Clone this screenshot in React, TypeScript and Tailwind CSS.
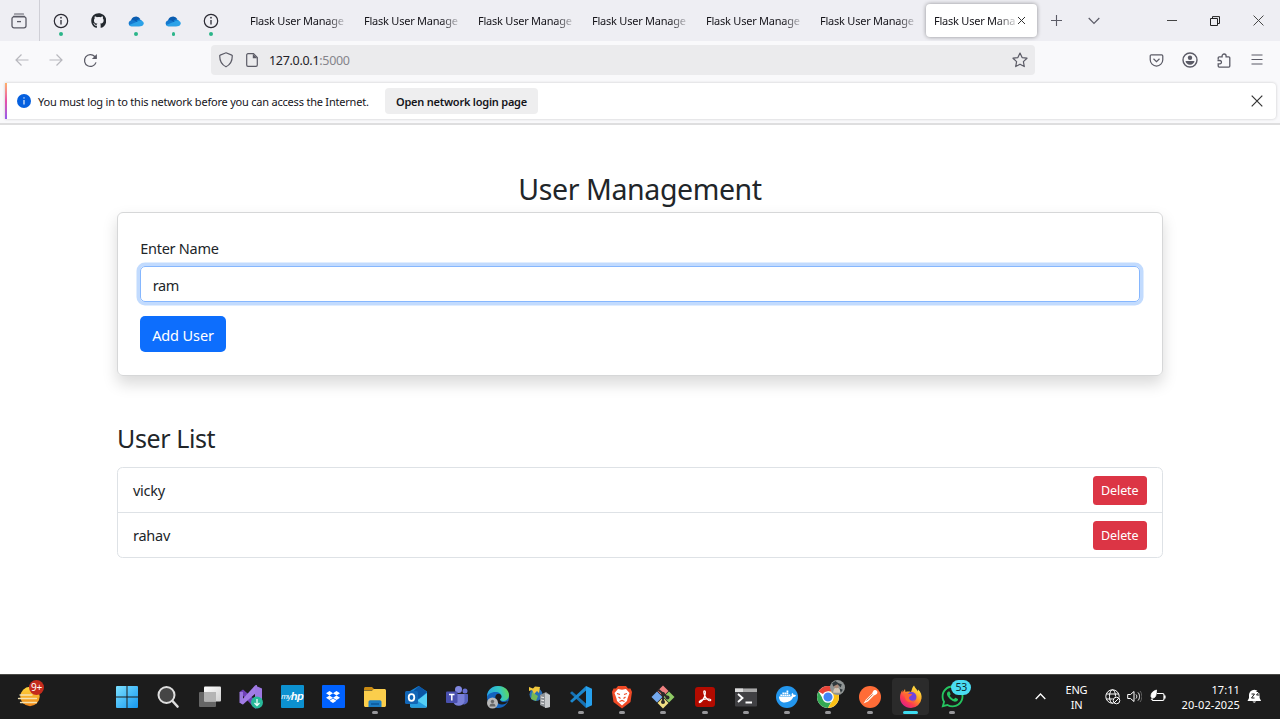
import React from "react";
import { FaGithub, FaDropbox, FaDocker, FaWhatsapp } from "react-icons/fa";

const tabs = [0, 1, 2, 3, 4, 5];

function Svg({ children, className = "size-6", box = "0 0 24 24" }: { children: React.ReactNode; className?: string; box?: string }) {
  return (
    <svg viewBox={box} className={`${className} shrink-0`} fill="none">
      {children}
    </svg>
  );
}

function InfoIcon() {
  return (
    <Svg className="size-4" box="0 0 16 16">
      <circle cx="8" cy="8" r="6.7" stroke="#2b2a33" strokeWidth="1.2" />
      <path d="M8 7v4.5" stroke="#2b2a33" strokeWidth="1.3" />
      <circle cx="8" cy="4.7" r=".85" fill="#2b2a33" />
    </Svg>
  );
}

function CloudIcon() {
  return (
    <Svg className="size-4" box="0 0 16 16">
      <path d="M3 8.2A5 5 0 0 1 12.3 6l-3 4.5L1 11.8A3.2 3.2 0 0 1 3 8.2z" fill="#0a5cb0" />
      <path d="M8.5 7.5 11 6.2a4 4 0 0 1 2.8 1.5l-2 3.5z" fill="#1283d8" />
      <path d="M1 11.5a3 3 0 0 1 2.5-4.3 4 4 0 0 1 3 .3l7 4.5-2 1.3h-8A2.8 2.8 0 0 1 1 11.5z" fill="#1479cf" />
      <path d="M1.2 12 9 8.8c1-.7 3.5-2 5.2-.8A2.8 2.8 0 0 1 13 13.3H3.4c-1 0-1.8-.6-2.2-1.3z" fill="#2ca2e8" />
    </Svg>
  );
}

function PinnedTab({ children, dot = true }: { children: React.ReactNode; dot?: boolean }) {
  return (
    <div className="relative flex h-[41px] w-[37.5px] items-center justify-center">
      {children}
      {dot && <span className="absolute top-[32px] size-[3.5px] rounded-full bg-[#2bb58a]" />}
    </div>
  );
}

function TabBar() {
  return (
    <div className="flex h-[41px] bg-[#eeeef3] text-[#15141a]">
      <div className="flex w-10 items-center justify-center border-r border-[#cfcfd6] pr-[2px]">
        <Svg className="size-4" box="0 0 16 16">
          <path d="M3.5 1h9M2.5 3.3h11" stroke="#5b5b66" strokeWidth="1.2" strokeLinecap="round" />
          <rect x="1" y="3.8" width="14" height="11" rx="2" stroke="#5b5b66" strokeWidth="1.3" />
          <path d="M6 8.6h4" stroke="#5b5b66" strokeWidth="1.3" />
        </Svg>
      </div>
      <div className="flex w-[193px] pl-[2px]">
        <PinnedTab><InfoIcon /></PinnedTab>
        <PinnedTab dot={false}><FaGithub className="size-[15.5px] text-[#24292f]" /></PinnedTab>
        <PinnedTab><CloudIcon /></PinnedTab>
        <PinnedTab><CloudIcon /></PinnedTab>
        <PinnedTab><InfoIcon /></PinnedTab>
      </div>
      {tabs.map((t) => (
        <div key={t} className="flex w-[114px] items-center pt-[2px] pr-[3px] pl-[17px]">
          <span className="w-[94px] overflow-hidden text-[11px] tracking-[-0.23px] whitespace-nowrap [mask-image:linear-gradient(to_right,#000_78px,transparent_98px)]">Flask User Manage</span>
        </div>
      ))}
      <div className="mt-[4px] ml-[9px] flex h-[33px] w-[111px] items-center rounded bg-white pl-[8px] shadow-[0_0_4px_rgba(0,0,0,0.4)]">
        <span className="w-[81px] overflow-hidden pt-px text-[11px] tracking-[-0.23px] whitespace-nowrap [mask-image:linear-gradient(to_right,#000_62px,transparent_86px)]">Flask User Mana</span>
        <Svg className="ml-[2px] size-[9px]" box="0 0 9 9"><path d="m1 1 7 7M8 1 1 8" stroke="#333" strokeWidth="1" /></Svg>
      </div>
      <div className="flex w-[58px] items-center pl-[14px]">
        <Svg className="size-[11px]" box="0 0 11 11"><path d="M5.5 0v11M0 5.5h11" stroke="#5b5b66" strokeWidth="1.1" /></Svg>
        <Svg className="ml-[26px] size-3" box="0 0 12 12"><path d="m.7 3 5.3 5.3L11.3 3" stroke="#5b5b66" strokeWidth="1.2" /></Svg>
      </div>
      <div className="ml-auto flex items-center gap-[33px] pr-4">
        <Svg className="size-[10px]" box="0 0 10 10"><path d="M0 4.5h10" stroke="#444" /></Svg>
        <Svg className="size-[10px]" box="0 0 10 10"><path d="M.5 2.5h7v7h-7zM2.5 2V.6h7v6.9H8" stroke="#222" /></Svg>
        <Svg className="size-[11px]" box="0 0 10 10"><path d="m.5.5 9 9M9.5.5l-9 9" stroke="#444" strokeWidth=".9" /></Svg>
      </div>
    </div>
  );
}

function Toolbar() {
  return (
    <div className="flex h-[42px] items-center bg-[#f9f9fb] pb-[4px]">
      <div className="flex w-[211px] items-center gap-[20px] pl-[15px]">
        <Svg className="size-[14px]" box="0 0 14 14"><path d="M13.5 7H1M6.5 1.5 1 7l5.5 5.5" stroke="#b8b8be" strokeWidth="1.2" /></Svg>
        <Svg className="size-[14px]" box="0 0 14 14"><path d="M.5 7H13M7.5 1.5 13 7l-5.5 5.5" stroke="#b8b8be" strokeWidth="1.2" /></Svg>
        <Svg className="size-[15px]" box="0 0 16 16"><path d="M13.9 10A6.3 6.3 0 1 1 12.5 3.7L14 5.2" stroke="#5b5b66" strokeWidth="1.3" /><path d="M14.8 1v5.3H9.5z" fill="#5b5b66" /></Svg>
      </div>
      <div className="flex h-[30px] w-[824px] items-center rounded bg-[#ebebed] pr-[7px] pl-[7px]">
        <Svg className="size-4" box="0 0 16 16"><path d="m8 .8 5.8 2.3c.3.1.5.4.5.7 0 4.5-2 9-6.3 11C3.7 12.800 1.7 8.3 1.7 3.8c0-.3.2-.6.5-.7z" stroke="#5b5b66" strokeWidth="1.2" /></Svg>
        <Svg className="ml-[11px] size-[14px]" box="0 0 14 14"><path d="M8.5.7H3A1.3 1.3 0 0 0 1.7 2v10A1.3 1.3 0 0 0 3 13.3h8a1.3 1.3 0 0 0 1.3-1.3V4.5z" stroke="#5b5b66" strokeWidth="1.2" /><path d="M7.8.7v4.6h4.5z" fill="#5b5b66" /></Svg>
        <span className="ml-[10px] pt-[2px] text-[12.5px] tracking-[-0.3px] text-[#222128]">127.0.0.1<span className="text-[#85858b]">:5000</span></span>
        <Svg className="ml-auto size-4" box="0 0 16 16"><path d="m8 1 2.1 4.6 4.9.6-3.6 3.4.9 5L8 12.2l-4.3 2.4.9-5L1 6.2l4.9-.6z" stroke="#5b5b66" strokeWidth="1.2" strokeLinejoin="round" /></Svg>
      </div>
      <div className="ml-auto flex items-center gap-[18px] pr-[17px]">
        <Svg className="-ml-px size-[15px]" box="0 0 16 16"><path d="M2.5 2h11c.7 0 1.2.5 1.2 1.2v4a6.7 6.7 0 0 1-13.4 0v-4C1.3 2.5 1.8 2 2.5 2z" stroke="#5b5b66" strokeWidth="1.3" /><path d="m4.8 6.2 3.2 3 3.2-3" stroke="#5b5b66" strokeWidth="1.3" /></Svg>
        <Svg className="size-4" box="0 0 16 16"><circle cx="8" cy="8" r="7" stroke="#5b5b66" strokeWidth="1.4" /><circle cx="8" cy="5.8" r="2.2" fill="#5b5b66" /><path d="M3.5 9h9c-.2 2-2 3.7-4.5 3.7S3.7 11 3.5 9z" fill="#5b5b66" /></Svg>
        <Svg className="size-[15px]" box="0 0 15 15"><path d="M2.2 6.5V4.8c0-.6.4-1 1-1h2.9V3a2 2 0 1 1 4 0v.8h2.7c.6 0 1 .4 1 1v8.3c0 .6-.4 1-1 1H3.2c-.6 0-1-.4-1-1v-2.3h1.6c2.2 0 2.2-3.300 0-3.300H1.5" stroke="#5b5b66" strokeWidth="1.3" /></Svg>
        <Svg className="ml-[2px] size-3" box="0 0 12 12"><path d="M.5 1h11M.5 5.5h11M.5 10h11" stroke="#5b5b66" strokeWidth="1.1" /></Svg>
      </div>
    </div>
  );
}

function Notice() {
  return (
    <div className="h-[42px] border-b-2 border-[#dededf] bg-[#f9f9fb] pr-1 pl-[5px]">
      <div className="flex h-9 items-center rounded-r bg-white shadow-[0_0_3px_rgba(0,0,0,0.2)]">
        <div className="h-full w-[2px] bg-linear-to-b from-[#ffb066] via-[#e74fa8] to-[#9457eb]" />
        <Svg className="ml-[10px] size-[14px]" box="0 0 14 14"><circle cx="7" cy="7" r="7" fill="#0560df" /><path d="M7 6v4.5" stroke="#fff" strokeWidth="1.1" /><circle cx="7" cy="3.9" r=".7" fill="#fff" /></Svg>
        <span className="ml-[7px] w-[331px] pt-[2px] text-[11px] tracking-[-0.21px] whitespace-nowrap text-[#15141a]">You must log in to this network before you can access the Internet.</span>
        <button className="ml-[16px] h-[26px] w-[153px] rounded bg-[#eeeeef] pt-[2px] text-[11px] font-semibold tracking-[-0.23px] whitespace-nowrap text-[#15141a]">Open network login page</button>
        <Svg className="mr-[13px] ml-auto size-3" box="0 0 12 12"><path d="m.7.7 10.6 10.6M11.3.7.7 11.3" stroke="#333" strokeWidth="1.2" /></Svg>
      </div>
    </div>
  );
}

function Row({ name }: { name: string }) {
  return (
    <li className="flex h-[45px] items-center justify-between border-b border-[#dee2e6] px-[15px] last:h-[44px] last:border-b-0">
      <span className="pt-[1.5px] text-[14.5px] tracking-[-0.25px]">{name}</span>
      <button className="h-[29px] w-[54.5px] rounded-[3.5px] bg-[#dc3545] pt-[2px] text-[12.5px] tracking-[-0.1px] text-white">Delete</button>
    </li>
  );
}

function TaskIcon({ children, mark = false, active = false }: { children: React.ReactNode; mark?: boolean; active?: boolean }) {
  return (
    <div className="relative flex h-[45px] w-[41.25px] items-center justify-center pb-[2px]">
      {active && <span className="absolute top-[3px] h-[37px] w-[37px] rounded bg-[#2b2b2b]" />}
      <span className="relative flex">{children}</span>
      {mark && <span className={active ? "absolute top-[36px] h-[3px] w-[15px] rounded bg-[#3ddcf0]" : "absolute top-[36px] h-[3px] w-[6px] rounded bg-[#97979a]"} />}
    </div>
  );
}

function Taskbar() {
  return (
    <footer className="flex h-[45px] border-t border-[#4a4a46] bg-[#1c1c1c] text-white">
      <div className="relative flex w-[106.6px] items-center pb-[2px] pl-[17px]">
        <Svg className="size-[26px]" box="0 0 26 26">
          <defs><linearGradient id="sun" x1="0" y1="0" x2="0" y2="1"><stop stopColor="#ffd83d" /><stop offset="1" stopColor="#ef8418" /></linearGradient></defs>
          <circle cx="13" cy="13.5" r="9.7" fill="url(#sun)" />
          <path d="M3 12h12M1.5 15.5h18M3.5 19.5h16" stroke="#f4e2b0" strokeWidth="1.3" strokeLinecap="round" />
        </Svg>
        <span className="absolute top-[5px] left-[29px] flex size-[15px] items-center justify-center rounded-full bg-[#c42b1c] text-[10px] tracking-[-0.3px]">9+</span>
      </div>
      <TaskIcon><Svg>
        <defs><linearGradient id="win" x1="0" y1="0" x2="1" y2="1"><stop stopColor="#7be0ff" /><stop offset="1" stopColor="#1597f0" /></linearGradient></defs>
        <path d="M1 2a1 1 0 0 1 1-1h9.5v10.5H1zM12.5 1H22a1 1 0 0 1 1 1v9.5H12.5zM1 12.5h10.5V23H2a1 1 0 0 1-1-1zM12.5 12.5H23V22a1 1 0 0 1-1 1h-9.5z" fill="url(#win)" />
      </Svg></TaskIcon>
      <TaskIcon><Svg><circle cx="10.5" cy="10" r="8" fill="#454545" stroke="#dedede" strokeWidth="2" /><path d="m16.5 16 5 5.5" stroke="#dedede" strokeWidth="2.6" strokeLinecap="round" /></Svg></TaskIcon>
      <TaskIcon><Svg>
        <defs><linearGradient id="tv" x1="0" y1="0" x2="1" y2="1"><stop stopColor="#fff" /><stop offset="1" stopColor="#cfcfcf" /></linearGradient></defs>
        <rect x="1" y="7" width="17" height="15" rx="1" fill="#666" /><rect x="6" y="1.5" width="17" height="15" rx="1" fill="url(#tv)" /><path d="M6 7h12v9.5H7a1 1 0 0 1-1-1z" fill="#b4b4b4" />
      </Svg></TaskIcon>
      <TaskIcon><Svg>
        <path d="m.5 7 3.500-2.500 14 12V23l-2 .5z" fill="#7040b8" /><path d="M.5 7v10.5L4 19.5V7z" fill="#9b78df" /><path d="m4 19.5-3.500-2L16 .5 18 0v7z" fill="#a27ce6" /><path d="m16 .5 7 3v16.5l-7 3.500z" fill="#9d78e2" />
        <circle cx="18" cy="17.5" r="6" fill="#28b99a" /><path d="M18 14v6.5M15.5 18l2.500 2.500 2.500-2.500" stroke="#e8fff9" strokeWidth="1.3" />
      </Svg></TaskIcon>
      <TaskIcon><span className="flex h-[23px] w-[23px] items-center justify-center rounded-[1px] bg-[#0c91d0] font-['Liberation_Sans',sans-serif] text-[8px] tracking-[-0.5px] italic">my<span className="text-[11px] font-bold">hp</span></span></TaskIcon>
      <TaskIcon><span className="flex h-[23px] w-[23px] items-center justify-center rounded-[1px] bg-[#0061fe]"><FaDropbox className="size-[14px]" /></span></TaskIcon>
      <TaskIcon mark><Svg>
        <path d="M1 3.5C1 2.7 1.7 2 2.5 2H9l3 3H1z" fill="#c98a12" /><path d="M1 5.5h8L11 4h10.5c.8 0 1.5.7 1.5 1.5v15c0 .8-.7 1.5-1.5 1.5h-19C1.7 22 1 21.3 1 20.5z" fill="#fbce4c" /><path d="M5.5 22v-5c0-1 .7-1.7 1.7-1.7h9.6c1 0 1.7.7 1.7 1.7v5z" fill="#1b7dc4" /><path d="M8 19h8" stroke="#0c5798" strokeWidth="1.5" />
      </Svg></TaskIcon>
      <TaskIcon><Svg>
        <path d="M6 6 14.5 1 23 6.5V21a1.5 1.5 0 0 1-1.5 1.5h-14A1.5 1.5 0 0 1 6 21z" fill="#1781d2" /><path d="m15 1 8 6-8 7-9-5z" fill="#0b55a4" /><path d="m6 21 17-13v13a1.5 1.5 0 0 1-1.5 1.5h-14z" fill="#54cff5" /><path d="m6 11 17 11-1.5.5h-14A1.5 1.5 0 0 1 6 21z" fill="#259cdf" />
        <rect x="1" y="6" width="13" height="13" rx="1.5" fill="#1266b6" /><ellipse cx="7.5" cy="12.5" rx="2.8" ry="3.3" stroke="#fff" strokeWidth="1.8" />
      </Svg></TaskIcon>
      <TaskIcon><Svg>
        <circle cx="20" cy="6" r="2.5" fill="#6870d0" /><path d="M16 9h6c.6 0 1 .4 1 1v6a4 4 0 0 1-7 2z" fill="#5661bd" /><circle cx="13.5" cy="4.5" r="3.5" fill="#8087df" /><path d="M8 9h10.5c.6 0 1 .4 1 1v6.5a6 6 0 0 1-11.5 0z" fill="#7980d8" /><rect x="1" y="6.5" width="11.5" height="11.5" rx="1" fill="#4950ae" /><path d="M4 9.5h5.5M6.8 9.5v6" stroke="#fff" strokeWidth="1.5" />
      </Svg></TaskIcon>
      <TaskIcon><Svg>
        <defs><linearGradient id="edge" x1="0" y1=".5" x2="1" y2=".3"><stop stopColor="#27a7e5" /><stop offset=".6" stopColor="#35c9bf" /><stop offset="1" stopColor="#65d84f" /></linearGradient></defs>
        <circle cx="12" cy="12" r="11" fill="#1464bd" /><path d="M1 12C1 5 6 1 12 1c7 0 11 4.5 11 9 0 4-3 6-6 6-2 0-3-.8-3-1.5s1.5-1 1.5-3C15.5 9 13 7 9.5 7 5 7 1.5 9.5 1 12z" fill="url(#edge)" /><path d="M10 10c-2 3 .5 9.500 6 9.500 2.500 0 4.500-1 6-3.500-4 2-8 1-8-1.500 0-.7 1.500-1 1.500-3 0-2-3.500-4-5.500-1.500z" fill="#1c1c1c" />
        <circle cx="6.5" cy="18" r="5.5" fill="#b9b9b9" /><circle cx="6.5" cy="16.5" r="1.7" fill="#696969" /><path d="M3.5 21.5a3 3 0 0 1 6 0z" fill="#696969" />
      </Svg></TaskIcon>
      <TaskIcon><Svg>
        <circle cx="8" cy="9.5" r="6.5" fill="#2a6fb7" /><path d="m4 7 6 4-2 5-5-2z" fill="#73b956" /><path d="m1 2 4 1.500 2-2 5 .5-1 6-2-2-3 3-2-4-3 1z" fill="#f2c83d" /><path d="m12 10 6-3 4 3v12l-4 1-6-3z" fill="#8e9296" /><path d="m17 8 5 2v12l-5 1z" fill="#c6c9cb" /><path d="m13 12 3 .7M13 15l3 .7M13 18l3 .7" stroke="#eee" />
      </Svg></TaskIcon>
      <TaskIcon mark><Svg>
        <path d="m17 1 6 2.7v16.6L17 23z" fill="#26a1ee" /><path d="m1 8 2-1.8 14 12.3V23z" fill="#1672b5" /><path d="m1 16 2 1.8L17 5.5V1z" fill="#1d88ce" />
      </Svg></TaskIcon>
      <TaskIcon mark><Svg>
        <path d="M8 1h8l2 2.500h2.500L22 7l-1.500 10L12 23.500 3.500 17 2 7l1.500-3.500H6z" fill="#f04a26" /><path d="M12 4.800 8 4 4.500 8l2 5.500.5 2.500 5 4.500 5-4.500.5-2.500 2-5.500L16 4z" fill="#fff" /><path d="m7 8.500 3 1M17 8.500l-3 1M8.500 12l2 1.500M15.500 12l-2 1.500M9.500 16.500l2.500-1 2.500 1" stroke="#f04a26" strokeWidth="1.2" />
      </Svg></TaskIcon>
      <TaskIcon mark><Svg>
        <path d="m12 .5 5.500 5.500L12 11.500 6.500 6z" fill="#ee8080" /><path d="m6 6.500 5.500 5.500L6 17.500.5 12z" fill="#74a9ee" /><path d="m18 6.500 5.500 5.500-5.500 5.500-5.500-5.500z" fill="#8fca65" /><path d="m12 12.500 5.500 5.500-5.500 5.500L6.500 18z" fill="#f1df84" /><path d="m7 4.500 5 4v9M12 8.500l4.500 4" stroke="#2e2a2a" strokeWidth="2" /><circle cx="12" cy="9" r="2" fill="#2e2a2a" /><circle cx="12" cy="17" r="2" fill="#2e2a2a" /><circle cx="16.5" cy="12.5" r="2" fill="#2e2a2a" />
      </Svg></TaskIcon>
      <TaskIcon mark><Svg><rect x="2" y="2" width="20" height="20" rx="3" fill="#b30b00" /><path d="M11 6c2-1 1.500 3 .5 5.500S8 18 6.500 17.500c-1.500-1 3-3.500 7-3.700 3-.2 5 .7 4 1.700-1.300 1.200-5-2.500-6-5.500C10.800 8 10.500 6.500 11 6z" stroke="#fff" strokeWidth="1.2" /></Svg></TaskIcon>
      <TaskIcon mark><Svg><rect x="1" y="3.5" width="22" height="18" rx="1" fill="#414144" /><path d="M1 3.500h22V7H1z" fill="#a9a9a9" /><path d="M1 3.500h8V7H1z" fill="#ddd" /><path d="m4 9 4.500 4L4 17M11.500 17.500H18" stroke="#fff" strokeWidth="1.9" /></Svg></TaskIcon>
      <TaskIcon mark><span className="flex size-[22px] items-center justify-center rounded-full bg-[#2396ed]"><FaDocker className="size-[17px]" /></span></TaskIcon>
      <TaskIcon mark>
        <Svg><circle cx="12" cy="12" r="11" fill="#fff" /><path d="M12 12 2.500 6.500A11 11 0 0 1 21.500 6.500H12z" fill="#e84437" /><path d="M2.500 6.500A11 11 0 0 0 12 23l4.500-8.500L12 17l-5-3z" fill="#34a853" /><path d="M21.500 6.500H12l5 8L12 23A11 11 0 0 0 21.500 6.500z" fill="#fbc116" /><circle cx="12" cy="12" r="5.2" fill="#4285f4" stroke="#fff" strokeWidth="1.3" /></Svg>
        <span className="absolute -top-[5px] left-[14px]"><Svg className="size-[15px]" box="0 0 14 14"><circle cx="7" cy="7" r="7" fill="#8f9494" /><path d="M3 12c0-3 1-5 3-5s4 2 4 5z" fill="#d1c5b5" /><circle cx="6" cy="5.5" r="2.3" fill="#ad8b79" /><path d="m2 3 3-2 3 2 3 1-1 3-3-3-4 2zM9 8l3 1-2 3z" fill="#30383c" /></Svg></span>
      </TaskIcon>
      <TaskIcon mark><Svg><circle cx="12" cy="12" r="11" fill="#ff6c37" /><path d="m5.500 18.500 2.500-4 6-6 2 2-6 6z" fill="#fff3e8" /><path d="m14 8.500 1-2a2.300 2.300 0 1 1 3 3l-2 1z" fill="#fff" /><path d="m8.500 15.500 6-6" stroke="#b74d2b" strokeWidth=".7" /></Svg></TaskIcon>
      <TaskIcon mark active><Svg>
        <defs><linearGradient id="fox" x1=".9" y1=".1" x2=".2" y2="1"><stop stopColor="#fff14a" /><stop offset=".4" stopColor="#ff9a22" /><stop offset=".7" stopColor="#ff3e4d" /><stop offset="1" stopColor="#d91b8f" /></linearGradient></defs>
        <path d="M15 .5c1 3 3 3.500 4 6V4.500c3 2.500 4 6 3.500 9A10.700 10.700 0 0 1 12 23C6 23 1 18.500 1 12.500 1 9.500 2 7 3.500 5v2.500L6 4l.5 3c2-.7 4-.5 5.500 0 1-2.500 1-4.500 3-6.500z" fill="url(#fox)" /><circle cx="12.5" cy="12" r="5" fill="#7143dd" /><path d="M5 9c3-1.500 5 .5 8 0 0 2-3 2-3 4s3 4 6 1.500c-1 4-9 4-10-2z" fill="#ff6533" />
      </Svg></TaskIcon>
      <TaskIcon mark><FaWhatsapp className="size-[25px] text-[#25c560]" /><span className="absolute -top-[4px] left-[11.5px] flex h-[15px] w-[20px] items-center justify-center rounded-full bg-[#4adcf2] text-[10.5px] tracking-[-0.3px] text-[#0b2a30]">53</span></TaskIcon>

      <div className="ml-auto flex items-center pb-px">
        <Svg className="size-[11px]" box="0 0 11 11"><path d="m.7 8 4.800-5 4.800 5" stroke="#fff" strokeWidth="1.3" /></Svg>
        <div className="ml-[17px] flex w-[27px] flex-col items-center text-[11px] leading-[15px] tracking-[-0.2px]"><span>ENG</span><span>IN</span></div>
        <Svg className="ml-[15px] size-4" box="0 0 16 16"><circle cx="7.5" cy="7.5" r="6.7" stroke="#fff" /><ellipse cx="7.5" cy="7.5" rx="3" ry="6.7" stroke="#fff" /><path d="M1.500 5h12M1.500 10h12" stroke="#fff" /><circle cx="11.5" cy="11.5" r="4" fill="#1c1c1c" /><circle cx="11.5" cy="11.5" r="3.3" stroke="#fff" /><path d="m9 14 5-5" stroke="#fff" /></Svg>
        <Svg className="ml-[6px] size-[15px]" box="0 0 15 15"><path d="M.7 5.500h2.800l3.500-3v10l-3.500-3H.7z" stroke="#fff" /><path d="M9 5.500c1 1 1 3 0 4M11 3.500c2 2 2 6 0 8" stroke="#fff" /><path d="M13 2c2.500 3 2.500 8 0 11" stroke="#666" /></Svg>
        <Svg className="ml-[8px] size-4" box="0 0 16 16"><path d="M7 4.500h5.500c.8 0 1.500.7 1.500 1.500v4c0 .8-.7 1.500-1.500 1.500h-9c-.8 0-1.500-.7-1.500-1.500M15 6.500v3" stroke="#fff" strokeWidth="1.2" /><path d="M6.500 1C3 2 1 4 1 7c0 1.300.8 2 2 2C5.500 9 6.500 6 6.500 1zM1 11l2-3" fill="#fff" stroke="#fff" strokeWidth=".8" /></Svg>
        <div className="ml-[8px] flex w-[66px] flex-col items-end text-[11px] leading-[15px] tracking-[0.1px] whitespace-nowrap"><span>17:11</span><span>20-02-2025</span></div>
        <Svg className="mr-[18px] ml-[7px] size-[15px]" box="0 0 15 15"><path d="M.5 12 2 9V6a5.300 5.300 0 0 1 10.600 0v3l1.500 3zM5.500 12.500a2 2 0 0 0 3.600 0z" fill="#fff" /><path d="M4.500 5h3l-3 4h3M9.500 2.500h3L9.500 6h3" stroke="#1c1c1c" /></Svg>
      </div>
    </footer>
  );
}

export default function App() {
  return (
    <div className="flex h-[719px] w-[1280px] flex-col overflow-hidden bg-white font-['Noto_Sans',sans-serif] text-[#212529]">
      <TabBar />
      <Toolbar />
      <Notice />
      <main className="mx-auto flex w-[1046px] flex-1 flex-col pt-[44px]">
        <h1 className="h-[43px] text-center text-[28.5px] leading-[40px] tracking-[-0.4px]">User Management</h1>
        <section className="h-[163.5px] rounded-[6px] border border-[#d6d7d8] px-[22.3px] pt-[24px] shadow-[0_7.5px_15px_rgba(0,0,0,0.15)]">
          <label className="block h-[29px] text-[14.5px] leading-[22px] tracking-[-0.28px]">Enter Name</label>
          <input className="block h-[36px] w-full rounded-[5px] border border-[#86b7fe] px-[11.5px] pt-[2px] text-[14.5px] tracking-[-0.5px] text-[#212529] shadow-[0_0_0_3.5px_rgba(13,110,253,0.25)] outline-none" defaultValue="ram" />
          <button className="mt-[14px] h-[36px] w-[85.500px] rounded-[5px] bg-[#0d6efd] pt-[3px] text-[14.5px] tracking-[-0.1px] whitespace-nowrap text-white">Add User</button>
        </section>
        <h2 className="mt-[44px] h-[47.5px] text-[25px] leading-[36px] tracking-[-0.4px]">User List</h2>
        <ul className="h-[91px] rounded-[5.5px] border border-[#dee2e6]">
          <Row name="vicky" />
          <Row name="rahav" />
        </ul>
      </main>
      <Taskbar />
    </div>
  );
}
